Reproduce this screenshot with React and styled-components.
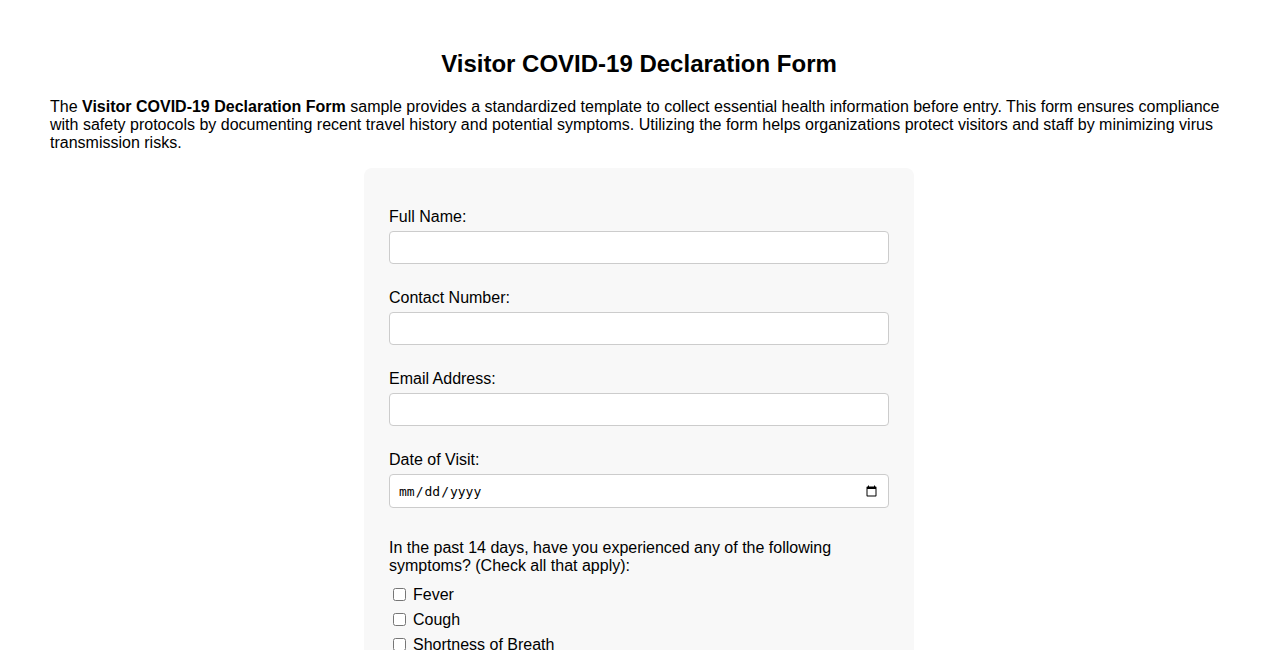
import styled, { createGlobalStyle } from "styled-components";

const GlobalStyle = createGlobalStyle`
    * { box-sizing: border-box; }
    body {
        margin: 0;
        background: #fff;
        color: #000;
        font-family: "Liberation Sans", Arial, sans-serif;
    }
`;

const Page = styled.div`
    padding: 50px 50px 40px;
`;

const Title = styled.h1`
    margin: 0 0 20px;
    font-size: 24px;
    line-height: 28px;
    text-align: center;
`;

const Intro = styled.p`
    margin: 0 0 16px;
    font-size: 16px;
    line-height: 18px;
`;

const Form = styled.form`
    width: 550px;
    margin: 0 auto;
    padding: 40px 25px 25px;
    background-color: #f8f8f8;
    border-radius: 8px;
`;

const Group = styled.div`
    margin-bottom: ${p => p.$gap || 25}px;
`;

const Label = styled.label`
    display: block;
    margin-bottom: 5px;
    font-size: 16px;
    line-height: 18px;
`;

const Input = styled.input`
    display: block;
    width: 100%;
    height: ${p => (p.type === "date" ? 34 : 33)}px;
    padding: 8px;
    border: 1px solid #ccc;
    border-radius: 4px;
    background: #fff;
    font-size: 13px;
    font-family: "DejaVu Sans Mono", monospace;
`;

const Question = styled.div`
    margin: 0 0 7px;
    font-size: 16px;
    line-height: 18px;
`;

const CheckRow = styled.label`
    display: flex;
    align-items: center;
    height: 25px;
    font-size: 16px;
    input {
        width: 13px;
        height: 13px;
        margin: 0 7px 0 4px;
    }
`;

const symptoms = ["Fever", "Cough", "Shortness of Breath", "Sore Throat", "Loss of Taste or Smell"];

function App() {
    return (
        <Page>
            <GlobalStyle />
            <Title>Visitor COVID-19 Declaration Form</Title>
            <Intro>
                The <strong>Visitor COVID-19 Declaration Form</strong> sample provides a standardized template to collect essential health information before entry. This form ensures compliance with safety protocols by documenting recent travel history and potential symptoms. Utilizing the form helps organizations protect visitors and staff by minimizing virus transmission risks.
            </Intro>
            <Form onSubmit={e => e.preventDefault()}>
                <Group>
                    <Label>Full Name:</Label>
                    <Input type="text" />
                </Group>
                <Group>
                    <Label>Contact Number:</Label>
                    <Input type="tel" />
                </Group>
                <Group>
                    <Label>Email Address:</Label>
                    <Input type="email" />
                </Group>
                <Group $gap={31}>
                    <Label>Date of Visit:</Label>
                    <Input type="date" />
                </Group>
                <Group>
                    <Question>In the past 14 days, have you experienced any of the following symptoms? (Check all that apply):</Question>
                    {symptoms.map(s => (
                        <CheckRow key={s}>
                            <input type="checkbox" />
                            {s}
                        </CheckRow>
                    ))}
                </Group>
            </Form>
        </Page>
    );
}

export default App;
